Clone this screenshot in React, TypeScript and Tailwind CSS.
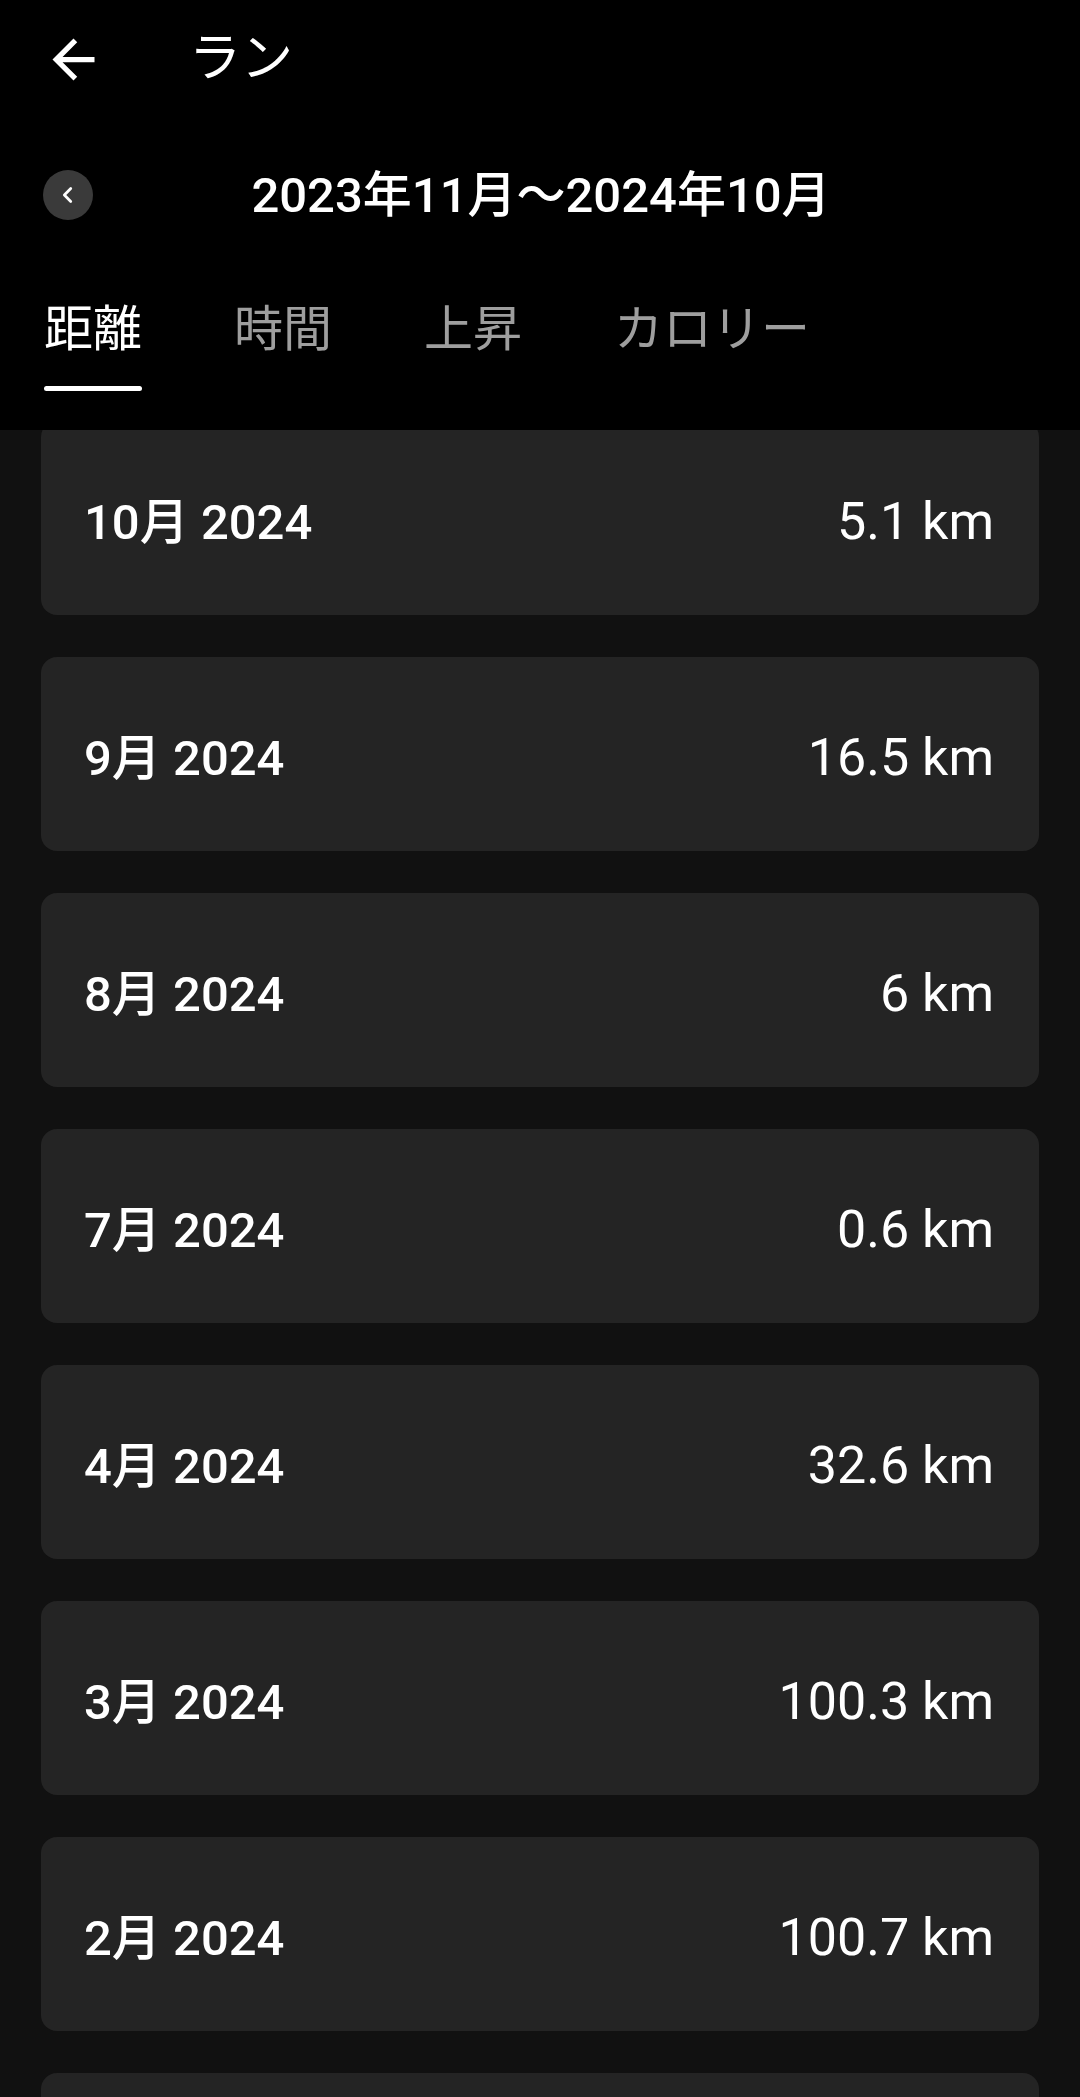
import React from "react";

const months = [
  { label: "10月 2024", value: "5.1 km" },
  { label: "9月 2024", value: "16.5 km" },
  { label: "8月 2024", value: "6 km" },
  { label: "7月 2024", value: "0.6 km" },
  { label: "4月 2024", value: "32.6 km" },
  { label: "3月 2024", value: "100.3 km" },
  { label: "2月 2024", value: "100.7 km" },
  { label: "", value: "" },
];

const tabs = ["距離", "時間", "上昇", "カロリー"];

function BackArrow() {
  return (
    <svg viewBox="0 0 24 24" className="w-[63px] h-[63px]" fill="#ffffff">
      <path d="M20 11H7.83l5.59-5.59L12 4l-8 8 8 8 1.41-1.41L7.83 13H20v-2z" />
    </svg>
  );
}

export default function App() {
  return (
    <div
      className="w-[1080px] h-[2097px] overflow-hidden bg-[#111111] text-white flex flex-col"
      style={{ fontFamily: 'Roboto, "Noto Sans CJK JP", sans-serif' }}
    >
      {/* Header */}
      <div className="bg-black shrink-0 h-[430px] flex flex-col">
        <div className="h-[114px] flex items-center pl-[42px] pt-[4px]">
          <BackArrow />
          <span className="ml-[84px] text-[52px] leading-none">ラン</span>
        </div>

        <div className="h-[162px] flex items-center pl-[43px] pr-[41px]">
          <button className="w-[50px] h-[50px] rounded-full bg-[#3a3a3a] flex items-center justify-center shrink-0">
            <svg viewBox="0 0 24 24" className="w-[22px] h-[22px]" fill="none" stroke="#ffffff" strokeWidth="3" strokeLinecap="round" strokeLinejoin="round">
              <path d="M15 5l-7 7 7 7" />
            </svg>
          </button>
          <div className="flex-1 text-center text-[49px] font-medium leading-none pr-[50px]">
            2023年11月〜2024年10月
          </div>
        </div>

        <div className="flex items-start pl-[44px] gap-[92px] pt-[29px]">
          {tabs.map((t, i) => (
            <div key={t} className="flex flex-col">
              <span className={`text-[49px] leading-none ${i === 0 ? "text-white" : "text-[#9e9e9e]"}`}>{t}</span>
              {i === 0 && <div className="mt-[32px] h-[5px] bg-white rounded-sm" />}
            </div>
          ))}
        </div>
      </div>

      {/* List */}
      <div className="flex-1 overflow-hidden">
        <div className="-mt-[9px] flex flex-col gap-[42px] px-[41px]">
          {months.map((m, i) => (
            <div key={i} className="h-[194px] shrink-0 rounded-[16px] bg-[#242424] pl-[43px] pr-[45px] pt-[8px] flex items-center justify-between">
              <span className="text-[49px] font-medium leading-none">{m.label}</span>
              <span className="text-[52px] leading-none">{m.value}</span>
            </div>
          ))}
        </div>
      </div>
    </div>
  );
}
